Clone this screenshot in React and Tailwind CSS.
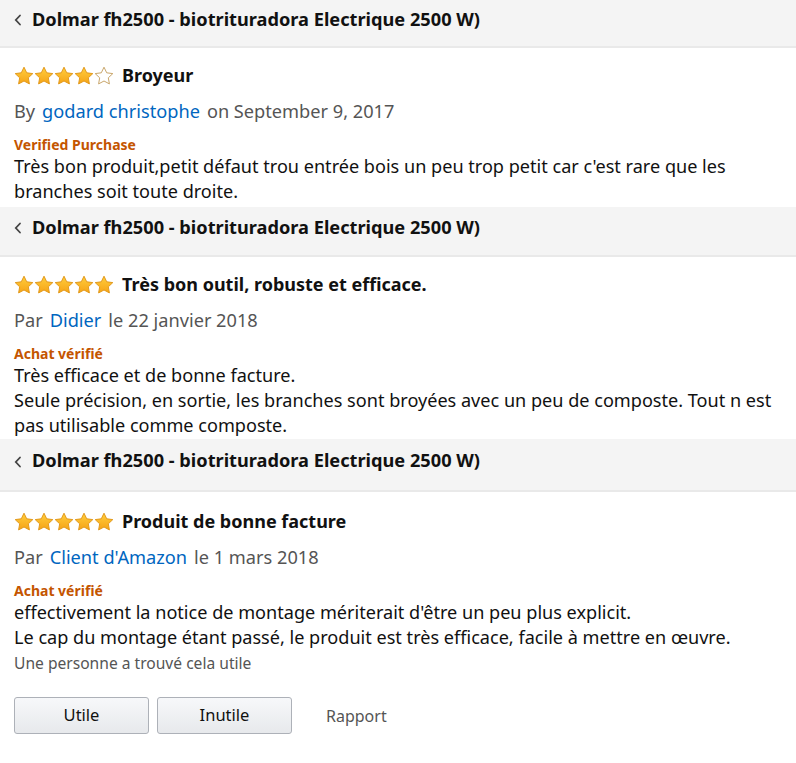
const reviews = [
  {
    rating: 4,
    title: 'Broyeur',
    by: 'By',
    author: 'godard christophe',
    date: 'on September 9, 2017',
    verified: 'Verified Purchase',
    body: ["Très bon produit,petit défaut trou entrée bois un peu trop petit car c'est rare que les branches soit toute droite."],
    headerH: 'h-[48px]',
    pt: 'pt-[14px]',
    pb: 'pb-[3px]',
  },
  {
    rating: 5,
    title: 'Très bon outil, robuste et efficace.',
    by: 'Par',
    author: 'Didier',
    date: 'le 22 janvier 2018',
    verified: 'Achat vérifié',
    body: [
      'Très efficace et de bonne facture.',
      'Seule précision, en sortie, les branches sont broyées avec un peu de composte. Tout n est pas utilisable comme composte.',
    ],
    headerH: 'h-[50px]',
    pt: 'pt-[14px]',
    pb: 'pb-[1px]',
  },
  {
    rating: 5,
    title: 'Produit de bonne facture',
    by: 'Par',
    author: "Client d'Amazon",
    date: 'le 1 mars 2018',
    verified: 'Achat vérifié',
    body: [
      "effectivement la notice de montage mériterait d'être un peu plus explicit.",
      'Le cap du montage étant passé, le produit est très efficace, facile à mettre en œuvre.',
    ],
    helpful: 'Une personne a trouvé cela utile',
    actions: true,
    headerH: 'h-[53px]',
    pt: 'pt-[16px]',
    pb: 'pb-[5px]',
  },
];

const STAR = 'M10 1.2l2.7 5.6 6.1.8-4.5 4.2 1.1 6.1L10 15 4.6 17.9l1.1-6.1L1.2 7.6l6.1-.8z';

const Star = ({ filled }) => (
  <svg width="20" height="19" viewBox="0 0 20 19">
    <defs>
      <linearGradient id="sg" x1="0" y1="0" x2="0" y2="1">
        <stop offset="0" stopColor="#ffce3d" />
        <stop offset="1" stopColor="#f6a316" />
      </linearGradient>
    </defs>
    <path
      d={STAR}
      fill={filled ? 'url(#sg)' : '#ffffff'}
      stroke={filled ? '#e29a1d' : '#c9a66b'}
      strokeWidth="1"
      strokeLinejoin="round"
    />
  </svg>
);

const ProductHeader = ({ height }) => (
  <div className={`flex items-center gap-[10px] bg-[#f4f4f4] border-b-2 border-[#e9e9e9] px-[14px] pb-[7px] ${height}`}>
    <svg width="8" height="12" viewBox="0 0 8 12" className="mt-[1px]">
      <path d="M6 1.5L1.8 6 6 10.5" fill="none" stroke="#444" strokeWidth="1.8" strokeLinecap="round" />
    </svg>
    <span className="text-[18.2px] font-bold text-[#111]">Dolmar fh2500 - biotrituradora Electrique 2500 W)</span>
  </div>
);

const Review = ({ r }) => (
  <div className={`px-[14px] ${r.pt} ${r.pb}`}>
    <div className="flex items-center h-[26px]">
      <div className="flex gap-0">
        {[0, 1, 2, 3, 4].map((i) => (
          <Star key={i} filled={i < r.rating} />
        ))}
      </div>
      <span className="ml-[8px] text-[18px] font-bold text-[#111]">{r.title}</span>
    </div>
    <div className="mt-[11px] h-[26px] flex items-center text-[18.2px] text-[#555]">
      <span>{r.by}</span>
      <span className="ml-[7px] text-[#0066c0]">{r.author}</span>
      <span className="ml-[7px]">{r.date}</span>
    </div>
    <div className="mt-[9px] h-[20px] flex items-center text-[14px] font-bold text-[#c45500]">{r.verified}</div>
    <div className="text-[18.1px] leading-[25px] text-[#111]">
      {r.body.map((line, i) => (
        <p key={i}>{line}</p>
      ))}
    </div>
    {r.helpful && <div className="mt-[3px] text-[15.6px] leading-[20px] text-[#555]">{r.helpful}</div>}
    {r.actions && (
      <div className="mt-[24px] flex items-center gap-[8px] pb-[24px]">
        <button className="w-[135px] h-[37px] rounded-[3px] border border-[#adb1b8] bg-gradient-to-b from-[#f7f8fa] to-[#e7e9ec] text-[16.5px] text-[#111]">
          Utile
        </button>
        <button className="w-[135px] h-[37px] rounded-[3px] border border-[#adb1b8] bg-gradient-to-b from-[#f7f8fa] to-[#e7e9ec] text-[16.5px] text-[#111]">
          Inutile
        </button>
        <span className="ml-[26px] text-[16px] text-[#555]">Rapport</span>
      </div>
    )}
  </div>
);

export default function App() {
  return (
    <div className="w-[796px] min-h-[763px] bg-white" style={{ fontFamily: '"Noto Sans", "Open Sans", sans-serif' }}>
      {reviews.map((r, i) => (
        <div key={i}>
          <ProductHeader height={r.headerH} />
          <Review r={r} />
        </div>
      ))}
    </div>
  );
}
